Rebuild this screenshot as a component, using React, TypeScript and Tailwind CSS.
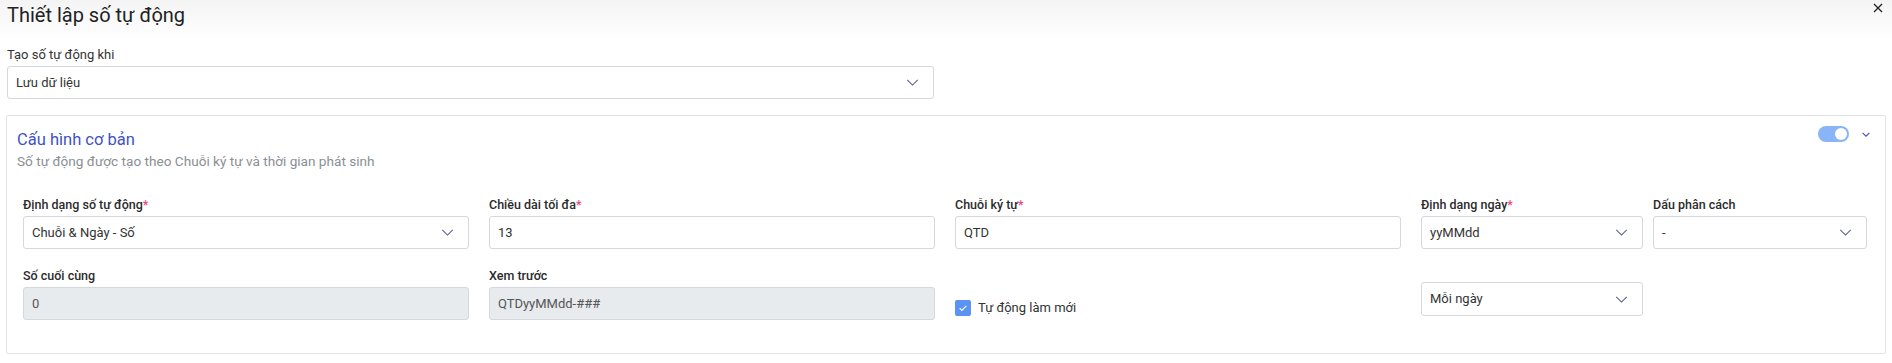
import React from "react"

const Chevron = ({ className = "", w = 1.2 }: { className?: string; w?: number }) => (
  <svg viewBox="0 0 14 8" className={className} fill="none">
    <path d="M1 1l6 6 6-6" stroke="currentColor" strokeWidth={w} />
  </svg>
)

const Label = ({ text, required }: { text: string; required?: boolean }) => (
  <div className="h-[16px] text-[12.5px] leading-[16px] font-medium text-[#2b2b2b] mb-[3px]">
    {text}
    {required && <span className="text-[#f0457a]">*</span>}
  </div>
)

const Select = ({ value, className = "" }: { value: string; className?: string }) => (
  <div
    className={`h-[33px] flex items-center justify-between border border-[#d5d8dc] rounded-[3px] bg-white pl-[8px] pr-[14px] text-[13px] text-[#333] ${className}`}
  >
    <span>{value}</span>
    <Chevron className="w-[13px] h-[7px] text-[#5a5f8c]" />
  </div>
)

const Input = ({ value, disabled }: { value: string; disabled?: boolean }) => (
  <div
    className={`h-[33px] flex items-center border rounded-[3px] pl-[8px] text-[13px] ${
      disabled ? "bg-[#e8ebee] border-[#d5d8dc] text-[#555]" : "bg-white border-[#d5d8dc] text-[#333]"
    }`}
  >
    {value}
  </div>
)

export default function App() {
  return (
    <div className="w-[1892px] h-[363px] bg-white relative font-['Roboto',sans-serif] text-[#222]">
      <div className="h-[40px] bg-gradient-to-b from-[#f4f4f4] to-white px-[7px] pt-[1px]">
        <h1 className="text-[20px] leading-[28px] text-[#222]">Thiết lập số tự động</h1>
      </div>
      <button className="absolute right-[9px] top-[3px] text-[#222]">
        <svg viewBox="0 0 10 10" className="w-[10px] h-[10px]">
          <path d="M1 1l8 8M9 1l-8 8" stroke="currentColor" strokeWidth="1.3" />
        </svg>
      </button>

      <div className="px-[7px] pt-[7px]">
        <div className="text-[13px] leading-[16px] text-[#333] mb-[3px]">Tạo số tự động khi</div>
        <Select value="Lưu dữ liệu" className="w-[927px]" />
      </div>

      <div className="mx-[6px] mt-[16px] h-[239px] border border-[#e1e4e6] rounded-[2px] pl-[10px] pr-[15px]">
        <div className="flex items-start justify-between">
          <div className="pt-[13px]">
            <div className="text-[16.5px] leading-[22px] text-[#4152c4]">Cấu hình cơ bản</div>
            <div className="text-[13.6px] leading-[18px] text-[#8a8f94] mt-[1px]">
              Số tự động được tạo theo Chuỗi ký tự và thời gian phát sinh
            </div>
          </div>
          <div className="flex items-center gap-[13px] pt-[10px]">
            <div className="w-[31px] h-[16px] rounded-full bg-[#8ab4f8] flex items-center justify-end pr-[2px]">
              <div className="w-[12px] h-[12px] rounded-full bg-white" />
            </div>
            <Chevron className="w-[8px] h-[5px] text-[#4a4fc4]" w={2} />
          </div>
        </div>

        <div className="grid grid-cols-[446px_446px_446px_446px] gap-x-[20px] mt-[27px] pl-[6px]">
          <div>
            <Label text="Định dạng số tự động" required />
            <Select value="Chuỗi & Ngày - Số" />
          </div>
          <div>
            <Label text="Chiều dài tối đa" required />
            <Input value="13" />
          </div>
          <div>
            <Label text="Chuỗi ký tự" required />
            <Input value="QTD" />
          </div>
          <div className="grid grid-cols-[222px_214px] gap-x-[10px]">
            <div>
              <Label text="Định dạng ngày" required />
              <Select value="yyMMdd" />
            </div>
            <div>
              <Label text="Dấu phân cách" />
              <Select value="-" />
            </div>
          </div>

          <div className="mt-[19px]">
            <Label text="Số cuối cùng" />
            <Input value="0" disabled />
          </div>
          <div className="mt-[19px]">
            <Label text="Xem trước" />
            <Input value="QTDyyMMdd-###" disabled />
          </div>
          <div className="mt-[51px] flex items-center h-[16px]">
            <div className="w-[16px] h-[16px] rounded-[2px] bg-[#5b93f2] flex items-center justify-center">
              <svg viewBox="0 0 12 12" className="w-[10px] h-[10px]" fill="none">
                <path d="M2 6.2l2.6 2.6L10 3.4" stroke="white" strokeWidth="1.4" />
              </svg>
            </div>
            <span className="ml-[7px] text-[13px] text-[#333]">Tự động làm mới</span>
          </div>
          <div className="mt-[33px] grid grid-cols-[222px_214px] gap-x-[10px]">
            <Select value="Mỗi ngày" className="h-[34px]" />
          </div>
        </div>
      </div>
    </div>
  )
}
